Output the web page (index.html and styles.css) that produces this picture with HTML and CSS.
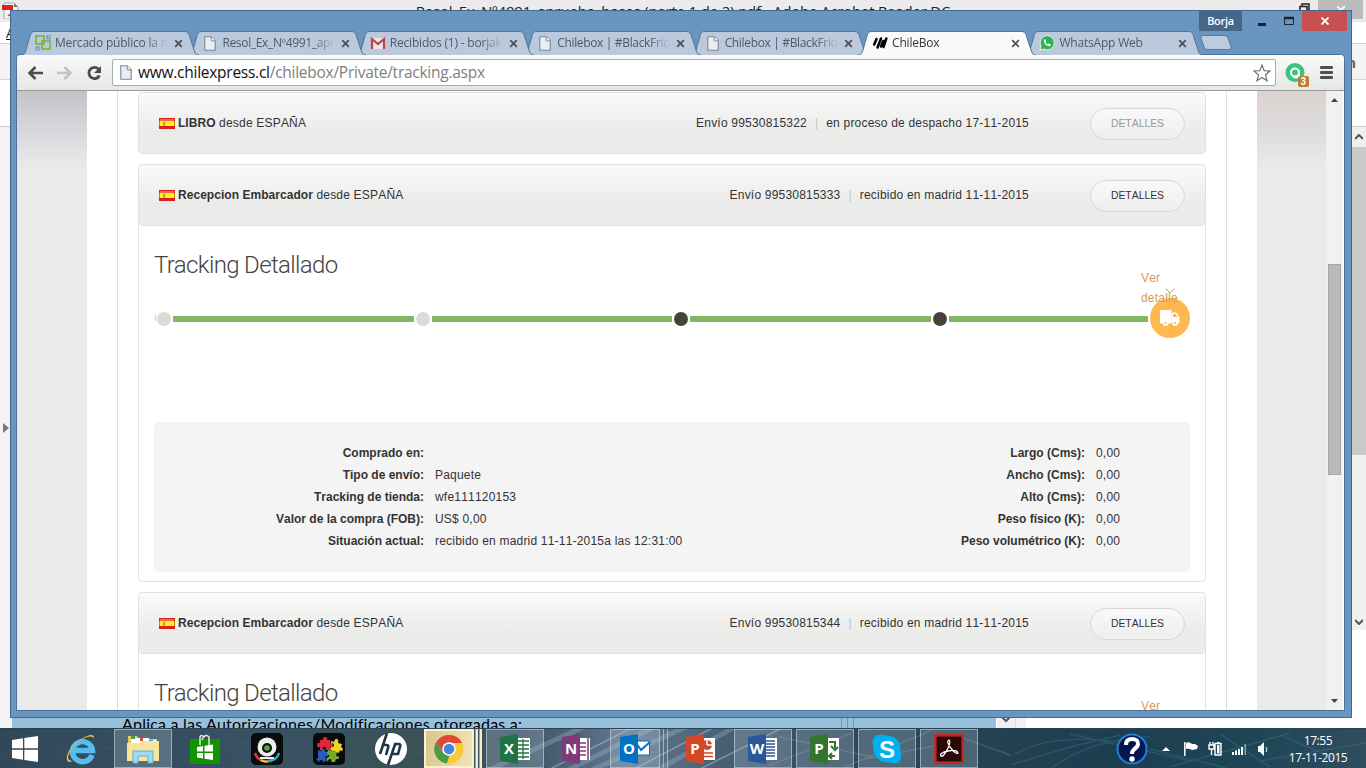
FILE: index.html
```html
<!DOCTYPE html>
<html lang="es">
<head>
<meta charset="utf-8">
<title>ChileBox</title>
<link rel="stylesheet" href="styles.css">
</head>
<body>
<svg width="0" height="0" class="defs">
  <symbol id="tab" viewBox="0 0 178 24" preserveAspectRatio="none"><path d="M0 24 C3 24 4 22 5 19 L9 5 C10 1.5 11 .5 14 .5 H163 C166 .5 167.500 1.500 168.500 5 L173 19 C174 22 175 24 178 24" stroke="#4f7499" stroke-width="1"/></symbol>
  <symbol id="doc" viewBox="0 0 12 15"><path d="M.8 .8H7.200L11.200 4.800V14.200H.8Z" fill="#e9eef4" stroke="#7e868e" stroke-width="1.100"/><path d="M7.200 .8V4.800H11.200" fill="#fff" stroke="#7e868e"/></symbol>
  <symbol id="x" viewBox="0 0 9 9"><path d="M1.200 1.200L7.800 7.800M7.800 1.200L1.200 7.800" stroke="#4d5157" stroke-width="1.800"/></symbol>
  <symbol id="flag" viewBox="0 0 16 11"><rect width="16" height="11" fill="#d52120"/><rect x="1" y="1" width="14" height="2" fill="#f0684a"/><rect x=".6" y="3" width="14.800" height="5" fill="#fdf01c"/><path d="M6.500 4Q4 4 4.500 5.500Q7 6 5.500 7.200H4" fill="none" stroke="#d9662c" stroke-width="1"/></symbol>
</svg>
<div class="desktop">

  <section class="acrobat">
    <div class="ac-title">Resol_Ex_Nº4991_aprueba_bases (parte 1 de 2).pdf - Adobe Acrobat Reader DC
      <svg class="ac-icon" width="20" height="19" viewBox="0 0 20 19"><path d="M4 3H14L18 7V19H4Z" fill="#f5f5f5" stroke="#aaa"/><path d="M14 3V7H18Z" fill="#777"/><path d="M2 5H13V10H2Z" fill="#dc2512"/><path d="M8 16L12 13" stroke="#d33" stroke-width="1.500"/></svg>
      <svg class="ac-restore" width="11" height="11" viewBox="0 0 11 11"><path d="M1 3.500H8V11H1ZM3 3V1H10V9H8" fill="none" stroke="#222" stroke-width="1.500"/></svg>
      <div class="ac-close"><svg width="8" height="8"><path d="M0 0L8 8M8 0L0 8" stroke="#fff" stroke-width="1.600"/></svg></div>
    </div>
    <div class="ac-menu">A</div>
    <div class="ac-tools">n</div>
    <div class="ac-bar"></div>
    <div class="ac-body">
      <svg class="ac-arrow" width="6" height="10"><path d="M0 0L6 5L0 10Z" fill="#777"/></svg>
      <div class="ac-scroll">
        <svg width="8" height="6"><path d="M0 5L4 1L8 5" fill="none" stroke="#555" stroke-width="2"/></svg>
        <div class="ac-thumb"></div>
        <svg width="8" height="6"><path d="M0 1L4 5L8 1" fill="none" stroke="#555" stroke-width="2"/></svg>
      </div>
    </div>
    <div class="ac-foot">
      <div class="ac-text"><span>Aplica a las Autorizaciones/Modificaciones otorgadas a:</span></div>
      <div class="ac-div"></div><div class="ac-blue"></div>
      <div class="ac-drop"><svg width="8" height="6"><path d="M0 0L4 4L8 0" fill="none" stroke="#555" stroke-width="2"/></svg></div>
      <div class="ac-gap"></div>
    </div>
  </section>

  <section class="chrome">
    <header class="titlebar">
      <div class="tabs">
        <div class="tab t1"><svg class="shape"><use href="#tab"/></svg><svg class="fav" width="16" height="16" viewBox="0 0 16 16"><g fill="none" stroke="#7fb63c" stroke-width="1.700"><rect x="1" y="1" width="8" height="8"/><rect x="7" y="6" width="8" height="8"/></g><g fill="none" stroke="#5b9be0" stroke-width="1.200"><rect x="12" y=".8" width="3" height="3"/><rect x="1" y="12" width="3" height="3"/></g></svg><span class="label">Mercado público la n</span><svg class="close"><use href="#x"/></svg></div>
        <div class="tab t2"><svg class="shape"><use href="#tab"/></svg><svg class="fav doc"><use href="#doc"/></svg><span class="label tight">Resol_Ex_Nº4991_apr</span><svg class="close"><use href="#x"/></svg></div>
        <div class="tab t3"><svg class="shape"><use href="#tab"/></svg><svg class="fav" width="16" height="16" viewBox="0 0 16 16"><path d="M1 3H15V14H1Z" fill="#e8e6ea"/><path d="M2 14V4L8 9L14 4V14" fill="none" stroke="#b8474a" stroke-width="2.200"/></svg><span class="label">Recibidos (1) - borjak</span><svg class="close"><use href="#x"/></svg></div>
        <div class="tab t4"><svg class="shape"><use href="#tab"/></svg><svg class="fav doc"><use href="#doc"/></svg><span class="label tight">Chilebox | #BlackFrida</span><svg class="close"><use href="#x"/></svg></div>
        <div class="tab t5"><svg class="shape"><use href="#tab"/></svg><svg class="fav doc"><use href="#doc"/></svg><span class="label tight">Chilebox | #BlackFrida</span><svg class="close"><use href="#x"/></svg></div>
        <div class="tab t6 active"><svg class="shape"><use href="#tab"/></svg><svg class="fav" width="16" height="16" viewBox="0 0 16 16"><path d="M2.200 9.500L4.500 4M5.500 12.500L9 3.500M9 11.500L11.200 6M11.500 12L14.300 3.500" stroke="#000" stroke-width="2.500" stroke-linecap="round"/></svg><span class="label">ChileBox</span><svg class="close"><use href="#x"/></svg></div>
        <div class="tab t7"><svg class="shape"><use href="#tab"/></svg><svg class="fav" width="16" height="16" viewBox="0 0 16 16"><path d="M1 15L2 11A7 7 0 1 1 5 14Z" fill="#2bb253" stroke="#e6f2e8"/><path d="M5.200 4.500C3.500 7.500 8.500 12.500 11.500 10.800L11.800 9.500L9.800 8.600L8.900 9.500Q7 8.700 6.600 7.200L7.300 6.300L6.500 4.300Z" fill="#fff"/></svg><span class="label">WhatsApp Web</span><svg class="close"><use href="#x"/></svg></div>
        <svg class="newtab" width="32" height="15" viewBox="0 0 32 15"><path d="M3 .5H25Q27 .5 28 3L31 12Q31.500 14.500 29 14.500H7Q5 14.500 4 12L1 3Q.5 .5 3 .5Z" fill="#bccbdd" stroke="#56799f"/></svg>
      </div>
      <div class="controls">
        <span class="user">Borja</span>
        <svg class="winbtn" width="60" height="20"><path d="M16 13.500H24" stroke="#1b2530" stroke-width="3"/><path d="M42.500 6.500H51.500V13.500H42.500Z" fill="none" stroke="#1b2530"/><path d="M42 7H52" stroke="#1b2530" stroke-width="2.500"/></svg>
        <span class="winclose"><svg width="8" height="8"><path d="M.5 .5L7.500 7.500M7.500 .5L.5 7.500" stroke="#fff" stroke-width="1.800"/></svg></span>
      </div>
    </header>
    <div class="client">
      <div class="toolbar">
        <svg class="nav" width="76" height="16" viewBox="0 0 76 16"><g fill="none" stroke-width="2.600"><path d="M16 8H3M8.500 2L2.500 8L8.500 14" stroke="#4c4c4c"/><path d="M30 8H43M37.500 2L43.500 8L37.500 14" stroke="#c3c3c3"/><path d="M71.500 4A5.600 5.600 0 1 0 72.500 10.500" stroke="#4c4c4c" stroke-width="2.800"/></g><path d="M74 1V8H67Z" fill="#4c4c4c"/></svg>
        <div class="omnibox">
          <svg class="urldoc"><use href="#doc"/></svg>
          <span class="url"><b>www.chilexpress.cl</b>/chilebox/Private/tracking.aspx</span>
          <svg class="star" width="18" height="18" viewBox="0 0 18 18"><path d="M9 1L11.200 6.700L17 7L12.500 10.800L14 16.800L9 13.500L4 16.800L5.500 10.800L1 7L6.800 6.700Z" fill="#fff" stroke="#707070" stroke-width="1.200"/></svg>
        </div>
        <svg class="ext" width="24" height="26" viewBox="0 0 24 26"><circle cx="10" cy="11.500" r="9.500" fill="#3dc47c"/><circle cx="10" cy="11.500" r="4" fill="none" stroke="#fff" stroke-width="2"/><path d="M14 10V16Q11 17.500 8 15.500" fill="none" stroke="#fff" stroke-width="1.800"/><rect x="13" y="15" width="11" height="11" rx="2" fill="#bd7d33"/><text x="15.500" y="24" font-family="Liberation Sans" font-weight="bold" font-size="10" fill="#fff">3</text></svg>
        <div class="menu"><i></i><i></i><i></i></div>
      </div>
      <div class="viewport">
        <div class="side left"></div>
        <main class="page">
          <article class="card">
            <div class="head"><svg class="flag"><use href="#flag"/></svg><span><b>LIBRO</b> desde ESPAÑA</span><span class="status">Envío 99530815322<em>|</em>en proceso de despacho 17-11-2015</span><a class="btn off">DETALLES</a></div>
          </article>
          <article class="card open">
            <div class="head"><svg class="flag"><use href="#flag"/></svg><span><b>Recepcion Embarcador</b> desde ESPAÑA</span><span class="status">Envío 99530815333<em>|</em>recibido en madrid 11-11-2015</span><a class="btn">DETALLES</a></div>
            <div class="body">
              <h2>Tracking Detallado</h2>
              <div class="timeline">
                <svg class="half" width="3" height="8"><path d="M2 1Q0 4 2 7" fill="none" stroke="#ccc"/></svg><i class="dot"></i><i class="seg"></i><i class="dot"></i><i class="seg"></i><i class="dot dark"></i><i class="seg"></i><i class="dot dark"></i><i class="seg last"></i>
                <span class="truck"><svg width="22" height="18" viewBox="0 0 22 18"><path d="M1.500 1.500H12V14H1.500ZM13 4H17L20 8V14H13Z" fill="#fff" stroke="#fff" stroke-linejoin="round"/><path d="M14 5H16.500L18.500 8H14Z" fill="#ffb850"/><circle cx="6.500" cy="14" r="2" fill="#ffb850" stroke="#fff" stroke-width="1.800"/><circle cx="16" cy="14" r="2" fill="#ffb850" stroke="#fff" stroke-width="1.800"/></svg></span>
                <span class="ver">Ver<br>detalle</span>
                <svg class="chev" width="10" height="6"><path d="M.5 .5L5 5L9.500 .5" fill="none" stroke="#c79b5a"/></svg>
              </div>
              <div class="details">
                <dl class="dl1"><dt>Comprado en:</dt><dd></dd><dt>Tipo de envío:</dt><dd>Paquete</dd><dt>Tracking de tienda:</dt><dd>wfe111120153</dd><dt>Valor de la compra (FOB):</dt><dd>US$ 0,00</dd><dt>Situación actual:</dt><dd>recibido en madrid 11-11-2015a las 12:31:00</dd></dl>
                <dl class="dl2"><dt>Largo (Cms):</dt><dd>0,00</dd><dt>Ancho (Cms):</dt><dd>0,00</dd><dt>Alto (Cms):</dt><dd>0,00</dd><dt>Peso físico (K):</dt><dd>0,00</dd><dt>Peso volumétrico (K):</dt><dd>0,00</dd></dl>
              </div>
            </div>
          </article>
          <article class="card open">
            <div class="head"><svg class="flag"><use href="#flag"/></svg><span><b>Recepcion Embarcador</b> desde ESPAÑA</span><span class="status">Envío 99530815344<em>|</em>recibido en madrid 11-11-2015</span><a class="btn">DETALLES</a></div>
            <div class="body">
              <h2>Tracking Detallado</h2>
              <div class="timeline"><span class="ver">Ver</span></div>
            </div>
          </article>
        </main>
        <div class="side right"></div>
        <div class="scroll">
          <svg width="7" height="4"><path d="M0 4L3.500 0L7 4Z" fill="#444"/></svg>
          <div class="thumb"></div>
          <svg width="7" height="4"><path d="M0 0L3.500 4L7 0Z" fill="#444"/></svg>
        </div>
      </div>
    </div>
  </section>

  <footer class="taskbar">
    <svg class="wall" viewBox="0 0 1366 40" preserveAspectRatio="none">
      <g fill="none" stroke="#a9c0d2" stroke-linecap="round">
        <path d="M480 45L590 -5M560 45L660 -5M590 42L690 -4M650 45L740 -5" stroke-width="5" opacity=".3"/>
        <path d="M540 45L640 -5M625 45L720 -5M700 40L780 0" stroke-width="1.500" opacity=".55"/>
        <path d="M770 36L850 5M780 8L900 34M865 30L960 12M840 40L930 2M960 8L1010 26" stroke-width="1.500" opacity=".2"/>
      </g>
      <g fill="none" stroke="#4c9ab0" stroke-width="1.500" opacity=".22"><path d="M1015 25Q1050 5 1110 12M1010 36L1070 18L1120 6M1050 40Q1090 10 1150 8M1150 20L1230 40M1170 38L1290 4M1260 32L1366 14M1280 6L1340 32M1070 5L1190 32M1220 5L1270 38"/></g>
      <g fill="none" stroke="#69889a" opacity=".14"><path d="M0 30L40 8M40 35L110 5M100 20L190 8M180 34L250 10M250 30L320 5M330 35L380 10M400 30L480 8M20 5L110 34M220 3L300 36"/></g>
    </svg>
    <div class="start"><svg width="26" height="26" viewBox="0 0 26 26"><path d="M0 4L11 2.200V12.300H0ZM12.300 2L26 0V12.300H12.300ZM0 13.700H11V23.800L0 22ZM12.300 13.700H26V26L12.300 24Z" fill="#fff"/></svg></div>
    <div class="apps">
      <div class="app"><svg width="32" height="32" viewBox="0 0 32 32"><path d="M27 22A10 10 0 1 1 27.500 17.500H10" fill="none" stroke="#55bdf0" stroke-width="5.500"/><path d="M4 29C-2 26 5 13 15 7C24 1 30 0 29 6C28 -1 8 8 4 21Q1 28 8 28Z" fill="#f8c62f"/></svg></div>
      <div class="app tile"><svg width="34" height="32" viewBox="0 0 34 32"><path d="M2 3H11L13 6H31V28H2Z" fill="#e9c86b"/><path d="M5 5H14V10H5ZM14 5H23V12H14ZM22 7H30V12H22Z" fill="#fff"/><path d="M5 3H9V6H5Z" fill="#3cab3f"/><path d="M14 5H17V8H14Z" fill="#dd4f32"/><path d="M23 7H27V9H23Z" fill="#438ad2"/><path d="M1 10H13L16 8H33V28H1Z" fill="#f8e49b"/><path d="M7 30V18H27V30H22V23H12V30Z" fill="#9edcf5" stroke="#5aaed8"/></svg></div>
      <div class="app"><svg width="30" height="32" viewBox="0 0 30 32"><path d="M0 6H30V31H0Z" fill="#109400"/><path d="M10 12V4Q11 1 14 4M12 7Q15 0 19 4V12" fill="none" stroke="#d9f0d6" stroke-width="1.500"/><path d="M7 14L13 13V18.500H7ZM14.500 12.700L23 11.500V18.500H14.500ZM7 20H13V25.500L7 24.500ZM14.500 20H23V27L14.500 25.700Z" fill="#fff"/></svg></div>
      <div class="app"><svg width="32" height="32" viewBox="0 0 32 32"><rect width="32" height="32" rx="5" fill="#0a0b0c"/><path d="M4 20Q7 29 16 28" fill="none" stroke="#d83b35" stroke-width="2.500"/><path d="M10 27Q16 31 23 26" fill="none" stroke="#e9df3b" stroke-width="2"/><path d="M16 28Q26 28 28 20" fill="none" stroke="#2daccf" stroke-width="2.500"/><circle cx="16" cy="14" r="9.500" fill="#ecefed"/><circle cx="16" cy="15" r="5" fill="#111"/><circle cx="16" cy="15" r="2.800" fill="#4ead35"/><path d="M9 25H23" stroke="#eee" stroke-width="2"/></svg></div>
      <div class="app"><svg width="32" height="32" viewBox="0 0 32 32"><rect width="32" height="32" rx="5" fill="#090a0b"/><path d="M7 7H10Q9 4 12 4Q15 4 14 7H17V10Q20 9 20 12Q20 15 17 14V17H13Q13 13 11 14Q9 14 10 17H7V14Q4 15 4 12Q4 9 7 10Z" fill="#df273c"/><path d="M18 8L21 9Q22 5 24 6Q26 7 25 10L29 11L28 14Q31 15 29 18Q27 18 27 17L26 20L17 17L18 14Q21 14 21 12Q21 10 18 10Z" fill="#efd324"/><path d="M5 17L8 18Q9 15 11 16Q13 17 12 19L15 19V23Q12 23 12 25L14 28L10 29Q9 26 8 27Q6 27 6 29L3 26Q6 25 5 23Z" fill="#2a5cc0"/><path d="M15 17L24 19L23 23Q27 23 26 25Q25 27 23 26L22 29H18Q19 26 17 26Q15 26 15 29L13 25Q17 24 16 22Q14 22 14 20Z" fill="#75aa2b"/></svg></div>
      <div class="app"><svg width="32" height="32" viewBox="0 0 32 32"><circle cx="16" cy="16" r="16" fill="#fff"/><g fill="none" stroke="#203747" stroke-width="2.600"><path d="M12 0L5 21M8 12H12Q14 12 13 15L11 22M20.500 10L13 32M19.500 11H24Q26 11 25 14L23 21H17"/></g></svg></div>
      <div class="app tile current"><svg width="30" height="30" viewBox="0 0 30 30"><circle cx="15" cy="15" r="14.500" fill="#f6cb35"/><path d="M2 9A14.500 14.500 0 0 1 28 9H15L9 18Z" fill="#df4838"/><path d="M2 8L10 20L16 19L13 29.500A14.500 14.500 0 0 1 2 8Z" fill="#4c9b4a"/><circle cx="15" cy="15" r="6.800" fill="#fff"/><circle cx="15" cy="15" r="5.300" fill="#4785dc"/></svg><i></i><i></i></div>
      <div class="app tile"><svg width="31" height="30" viewBox="0 0 31 30"><path d="M17 4H30V26H17Z" fill="#fff"/><path d="M18 7H29M18 11H29M18 15H29M18 19H29M18 23H29M23 5V25" stroke="#217346" stroke-width="1.300"/><path d="M0 3L18 0V30L0 27Z" fill="#217346"/><text class="ms" x="9" y="20">X</text></svg></div>
      <div class="app"><svg width="31" height="30" viewBox="0 0 31 30"><path d="M17 4H28V26H17Z" fill="#fff"/><path d="M18 9H24M18 13H24M18 17H24M18 21H24M26 4V26" stroke="#80397b" stroke-width="1.500"/><path d="M0 3L18 0V30L0 27Z" fill="#80397b"/><text class="ms" x="9" y="20">N</text></svg></div>
      <div class="app tile stack"><svg width="31" height="30" viewBox="0 0 31 30"><path d="M14 7H29.500V21H14Z" fill="#fff" stroke="#0072c6"/><path d="M16 9L21 16L30 8" fill="none" stroke="#0072c6" stroke-width="2"/><path d="M0 3L18 0V30L0 27Z" fill="#0072c6"/><text class="ms" x="9" y="20">O</text></svg><i></i><i></i></div>
      <div class="app"><svg width="31" height="30" viewBox="0 0 31 30"><path d="M15 4H29V26H15Z" fill="#fff"/><circle cx="21" cy="11" r="5" fill="#d24726"/><path d="M21 11V5M21 11H27" stroke="#fff" stroke-width="1.500"/><path d="M17 19H27M17 22.500H27" stroke="#d24726" stroke-width="1.500"/><path d="M0 3L18 0V30L0 27Z" fill="#d24726"/><text class="ms" x="9" y="20">P</text></svg></div>
      <div class="app tile"><svg width="31" height="30" viewBox="0 0 31 30"><path d="M17 4H29V26H17Z" fill="#fff"/><path d="M18 7H27M18 10H27M18 13H27M18 16H27M18 19H27M18 22H27" stroke="#2b579a" stroke-width="1.500"/><path d="M0 3L18 0V30L0 27Z" fill="#2b579a"/><text class="ms" x="9" y="20">W</text></svg></div>
      <div class="app tile"><svg width="31" height="30" viewBox="0 0 31 30"><path d="M17 4H29V26H17Z" fill="#fff"/><path d="M19 8H25V14M21 12L25 16L28 13M25 22H20M22 19L19 22L22 25" fill="none" stroke="#31752f" stroke-width="2"/><path d="M0 3L18 0V30L0 27Z" fill="#31752f"/><text class="ms" x="9" y="20">P</text></svg></div>
      <div class="app tile"><svg width="30" height="30" viewBox="0 0 30 30"><g fill="#00aff0"><circle cx="15" cy="15" r="13.500"/><circle cx="8.500" cy="8.500" r="8"/><circle cx="21.500" cy="21.500" r="8"/></g><text x="15" y="23.500" text-anchor="middle" font-family="Liberation Sans" font-weight="bold" font-size="24" fill="#fff">S</text></svg></div>
      <div class="app tile"><svg width="30" height="30" viewBox="0 0 30 30"><rect x="1.300" y="1.300" width="27.400" height="27.400" fill="#2c0808" stroke="#be2a25" stroke-width="2.600"/><path d="M7 22Q5 19 14 17Q23 15 24 19Q22 21 16 13Q12 7 15 6Q17 7 14 14Q9 24 7 22Z" fill="none" stroke="#fff" stroke-width="1.300"/></svg></div>
    </div>
    <div class="tray">
      <svg class="help" width="32" height="32" viewBox="0 0 32 32"><circle cx="16" cy="16" r="14.500" fill="#07164f" stroke="#1e7fd6" stroke-width="2"/><path d="M10 12Q10 6 16 6Q22.500 6 22 11.500Q21.500 14 18 16.500Q16 18 16 21" fill="none" stroke="#fff" stroke-width="4"/><circle cx="16" cy="26" r="2.700" fill="#fff"/></svg>
      <svg class="up" width="8" height="4"><path d="M0 4L4 0L8 4Z" fill="#fff"/></svg>
      <svg class="ic" width="84" height="16" viewBox="0 0 84 16"><path d="M.8 1V15" stroke="#fff" stroke-width="1.500"/><path d="M2 2Q5 0 8 3V9Q5 7 2 8ZM8 3H11L14 5L13 8L8 9Z" fill="#fff"/><g fill="none" stroke="#fff" stroke-width="1.400"><path d="M25 4H30V8H25ZM26 1V4M29 1V4M27.500 8V14M31 2.500H37V14H31Z"/></g><path d="M33 4H35.500V12.500H33ZM33 1H35.500V3H33Z" fill="#fff"/><path d="M48 11H50V14H48ZM51 9.500H53V14H51ZM54 8H56V14H54ZM57 6H59V14H57Z" fill="#fff"/><path d="M60.500 3H62V14H60.500Z" fill="#91a0a8"/><path d="M74 5H76L80 1V15L76 11H74Z" fill="#fff"/><path d="M82 6Q84 8 82 11" fill="none" stroke="#fff"/></svg>
      <div class="clock"><span>17:55</span><span>17-11-2015</span></div>
    </div>
  </footer>
</div>
</body>
</html>
```
FILE: styles.css
```css
* { box-sizing: border-box; }
body { margin: 0; overflow: hidden; font-family: "Liberation Sans", Arial, sans-serif; }
i { font-style: normal; }
.defs { position: absolute; }
.desktop { position: relative; width: 1366px; height: 768px; overflow: hidden; display: flex; flex-direction: column; }

/* Acrobat window in the background */
.acrobat { height: 728px; display: flex; flex-direction: column; background: #fff; font-family: "Open Sans", sans-serif; }
.ac-title { position: relative; height: 22px; background: #ebebeb; text-align: center; font-size: 15px; line-height: 23px; color: #222; letter-spacing: -.19px; white-space: nowrap; }
.ac-icon { position: absolute; left: 0; top: 0; }
.ac-restore { position: absolute; left: 1299px; top: 3px; }
.ac-close { position: absolute; left: 1318px; top: 0; width: 45px; height: 19px; background: #bcbcbc; display: flex; justify-content: center; padding-top: 6px; }
.ac-menu { height: 22px; border-bottom: 1px solid #d0d0d0; font-size: 13px; padding: 2px 0 0 6px; color: #111; text-decoration: underline; }
.ac-tools { height: 36px; background: #f4f4f4; border-bottom: 1px solid #d4d4d4; font-weight: bold; font-size: 15px; text-align: right; padding: 8px 10px 0 0; color: #666; }
.ac-bar { height: 47px; border-bottom: 1px solid #ccc; }
.ac-body { height: 590px; background: #f3f3f3; display: flex; justify-content: space-between; align-items: flex-start; }
.ac-arrow { margin: 296px 0 0 3px; }
.ac-scroll { width: 15px; height: 503px; background: #f0f0f0; display: flex; flex-direction: column; align-items: center; padding: 7px 1px 5px; justify-content: space-between; box-shadow: 0 87px 0 #fff; }
.ac-thumb { width: 14px; height: 308px; background: #cacaca; margin-bottom: 158px; }
.ac-foot { position: relative; height: 11px; display: flex; background: #fff; border-left: 12px solid #f3f3f3; }
.ac-text { width: 829px; height: 11px; background: #98bfda; overflow: hidden; padding-left: 110px; font-size: 16px; line-height: 13px; color: #000; white-space: nowrap; font-family: "Lato", sans-serif; }
.ac-text span { letter-spacing: .21px; }
.ac-div { width: 17px; background: repeating-linear-gradient(90deg, #6e98b8 0 1px, #98bfda 1px 6px); }
.ac-blue { width: 138px; background: #98bfda; }
.ac-drop { width: 19px; background: #f0f0f0; display: flex; justify-content: center; border-left: 1px solid #fff; }
.ac-gap { width: 11px; background: #f2f2f2; border-left: 1px solid #ddd; }

/* Browser window */
.chrome { position: absolute; left: 10px; top: 10px; width: 1342px; height: 708px; background: #6a95c0; border: 1px solid #41688f; padding: 0 7px 7px 6px; }
.titlebar { height: 44px; display: flex; justify-content: space-between; align-items: flex-start; }
.tabs { display: flex; padding: 20px 0 0 4px; height: 44px; width: 1100px; }
.tab { position: relative; isolation: isolate; width: 178px; height: 24px; flex: none; margin-right: -10.600px; display: flex; align-items: center; padding: 0 16px 0 14px; color: #4d5a69; }
.shape { position: absolute; left: 0; top: 0; width: 178px; height: 24px; fill: #bac9db; z-index: -1; }
.active .shape { fill: #f9fafa; }
.t1 { z-index: 6; } .t2 { z-index: 5; } .t3 { z-index: 4; } .t4 { z-index: 3; } .t5 { z-index: 2; } .t6 { z-index: 8; color: #333; } .t7 { z-index: 1; }
.fav { flex: none; margin-right: 4px; }
.fav.doc { width: 12px; height: 15px; margin: 0 6px 0 2px; }
.label { width: 122px; flex: none; white-space: nowrap; font-family: "Open Sans", sans-serif; font-size: 12px; line-height: 20px; letter-spacing: -.2px; -webkit-mask-image: linear-gradient(90deg, #000 92px, transparent 113px); mask-image: linear-gradient(90deg, #000 92px, transparent 113px); }
.tight { letter-spacing: -.34px; }
.close { width: 9px; height: 9px; margin-left: -3px; flex: none; }
.newtab { margin: 4px 0 0 7px; flex: none; }
.controls { display: flex; height: 20px; margin-right: -3px; }
.user { width: 43px; background: #47678a; color: #fff; font: 600 11px/20px "Open Sans", sans-serif; text-align: center; letter-spacing: -.3px; }
.winclose { width: 45px; background: #c85050; display: flex; align-items: center; justify-content: center; }
.client { height: 655px; background: #fff; border-radius: 4px 4px 0 0; overflow: hidden; box-shadow: 0 0 0 1px #4c7299; }
.toolbar { height: 36px; background: linear-gradient(#fafafa, #e6e6e6); border-bottom: 1px solid #9b9b9b; display: flex; align-items: center; padding: 0 10px; }
.nav { margin-right: 9px; flex: none; }
.omnibox { width: 1164px; height: 27px; background: #fff; border: 1px solid #adadad; border-radius: 2px; display: flex; align-items: center; padding: 0 4px 0 7px; flex: none; }
.urldoc { width: 12px; height: 15px; margin-right: 6px; flex: none; }
.url { font-family: "Open Sans", sans-serif; font-size: 15.500px; color: #808080; letter-spacing: -.26px; line-height: 20px; white-space: nowrap; margin-bottom: 2px; }
.url b { font-weight: normal; color: #111; }
.star { margin-left: auto; }
.ext { margin: 3px 0 0 9px; flex: none; }
.menu { margin-left: 11px; display: flex; flex-direction: column; gap: 2px; }
.menu i { width: 13px; height: 3px; background: #505050; border-radius: 1px; }
.viewport { display: flex; height: 620px; overflow: hidden; }
.side { flex: none; }
.left { width: 70px; background: linear-gradient(#c3c4c9, #dcdde0 50px, #eaeaea 78px); }
.right { width: 69px; background: linear-gradient(#dcd2cf, #dddcde 40px, #eaeaea 78px); }
.scroll { width: 17px; background: #f1f1f1; display: flex; flex-direction: column; align-items: center; padding: 7px 0 8px; }
.thumb { width: 13px; height: 211px; margin: 162px 0 224px; background: #bababa; border: 1px solid #a6a6a6; flex: none; }
.page { width: 1110px; margin: 0 30px; padding: 1px 20px 0; border: solid #dedede; border-width: 0 1px; height: 640px; flex: none; font-size: 12px; letter-spacing: .2px; color: #333; font-kerning: none; }
.card { width: 1068px; border: 1px solid #e0e0e0; border-radius: 4px; margin-bottom: 10px; background: #fff; }
.head { height: 60px; display: flex; align-items: center; padding: 0 20px; background: linear-gradient(#fafafa, #ebebea 65%); border-radius: 4px; }
.head b { letter-spacing: .04px; }
.open .head { height: 61px; border-bottom: 1px solid #e0e0e0; }
.flag { width: 16px; height: 11px; margin: 0 3px 0 0; }
.status { margin-left: auto; margin-right: 61px; }
.status em { color: #c4c4c4; margin: 0 8px; font-style: normal; }
.btn { width: 95px; height: 32px; margin-top: 2px; border: 1px solid #d8d8d8; border-radius: 16px; background: linear-gradient(#f9f9f9, #eee); text-align: center; line-height: 30px; font-size: 10.400px; letter-spacing: 0; color: #333; }
.btn.off { color: #999; }
.body { height: 355px; padding: 0 15px; }
h2 { margin: 0; padding-top: 24px; height: 72px; font: 300 24px/30px "Roboto", sans-serif; color: #47433c; letter-spacing: -.64px; }
.timeline { position: relative; height: 40px; display: flex; align-items: center; gap: 2px; }
.half { margin-right: -2px; flex: none; }
.dot { width: 14px; height: 14px; border-radius: 50%; background: #dadbd8; flex: none; margin-top: 1px; }
.dot.dark { background: #46433a; }
.seg { flex: 241 1 0; height: 6px; background: #82b864; margin-top: 1px; }
.seg.last { flex-grow: 199; }
.truck { width: 40px; height: 40px; border-radius: 50%; background: #ffb850; display: flex; align-items: center; justify-content: center; flex: none; }
.ver { position: absolute; left: 987px; top: -30px; line-height: 20px; color: #d59b50; }
.chev { position: absolute; left: 1011px; top: -10px; }
.details { margin-top: 84px; height: 150px; background: #f4f4f4; border-radius: 5px; padding: 20px 0; display: flex; }
dl { margin: 0; display: grid; grid-auto-rows: 22px; line-height: 22px; column-gap: 11px; }
.dl1 { grid-template-columns: 270px 300px; width: 661px; }
.dl2 { grid-template-columns: 270px 80px; }
dt { font-weight: bold; text-align: right; letter-spacing: 0; }
dd { margin: 0; }

/* Taskbar */
.taskbar { position: relative; height: 40px; display: flex; background: linear-gradient(90deg, #31485a, #385263 20%, #3a5156 30%, #3d5263 38%, #637890 46%, #4b6278 52%, #31495f 60%, #274154 70%, #1c3f50 82%, #1e4656 92%, #314d5f); border-top: 1px solid #2b4254; z-index: 2; }
.wall { position: absolute; left: 0; top: 0; width: 1366px; height: 40px; }
.start { width: 52px; display: flex; align-items: center; padding-left: 12px; position: relative; }
.apps { display: flex; gap: 4px; position: relative; }
.app { width: 58px; height: 39px; display: flex; align-items: center; justify-content: center; position: relative; }
.tile { background: rgba(190,210,220,.25); border: 1px solid rgba(200,215,222,.6); }
.current, .stack { width: 50px; margin-right: 8px; }
.current { background: linear-gradient(100deg, #d9c58c, #f2e4b8); border: 2px solid #f8f1d2; }
.tile i { position: absolute; right: -5px; top: -1px; width: 3px; height: 39px; border-right: 1px solid rgba(210,220,228,.6); }
.tile i:last-child { right: -9px; }
.current i { top: -2px; border-right: 2px solid #f4edcc; background: #a89f7c; right: -6px; }
.current i:last-child { right: -10px; }
.ms { font: bold 15px "Open Sans", sans-serif; fill: #fff; text-anchor: middle; }
.tray { margin-left: auto; display: flex; align-items: center; padding-right: 18px; position: relative; }
.up { margin: 0 14px; }
.ic { margin-right: 20px; }
.clock { width: 60px; display: flex; flex-direction: column; align-items: center; font: 12px/17px "Open Sans", sans-serif; color: #fff; letter-spacing: -.4px; white-space: nowrap; }
```
